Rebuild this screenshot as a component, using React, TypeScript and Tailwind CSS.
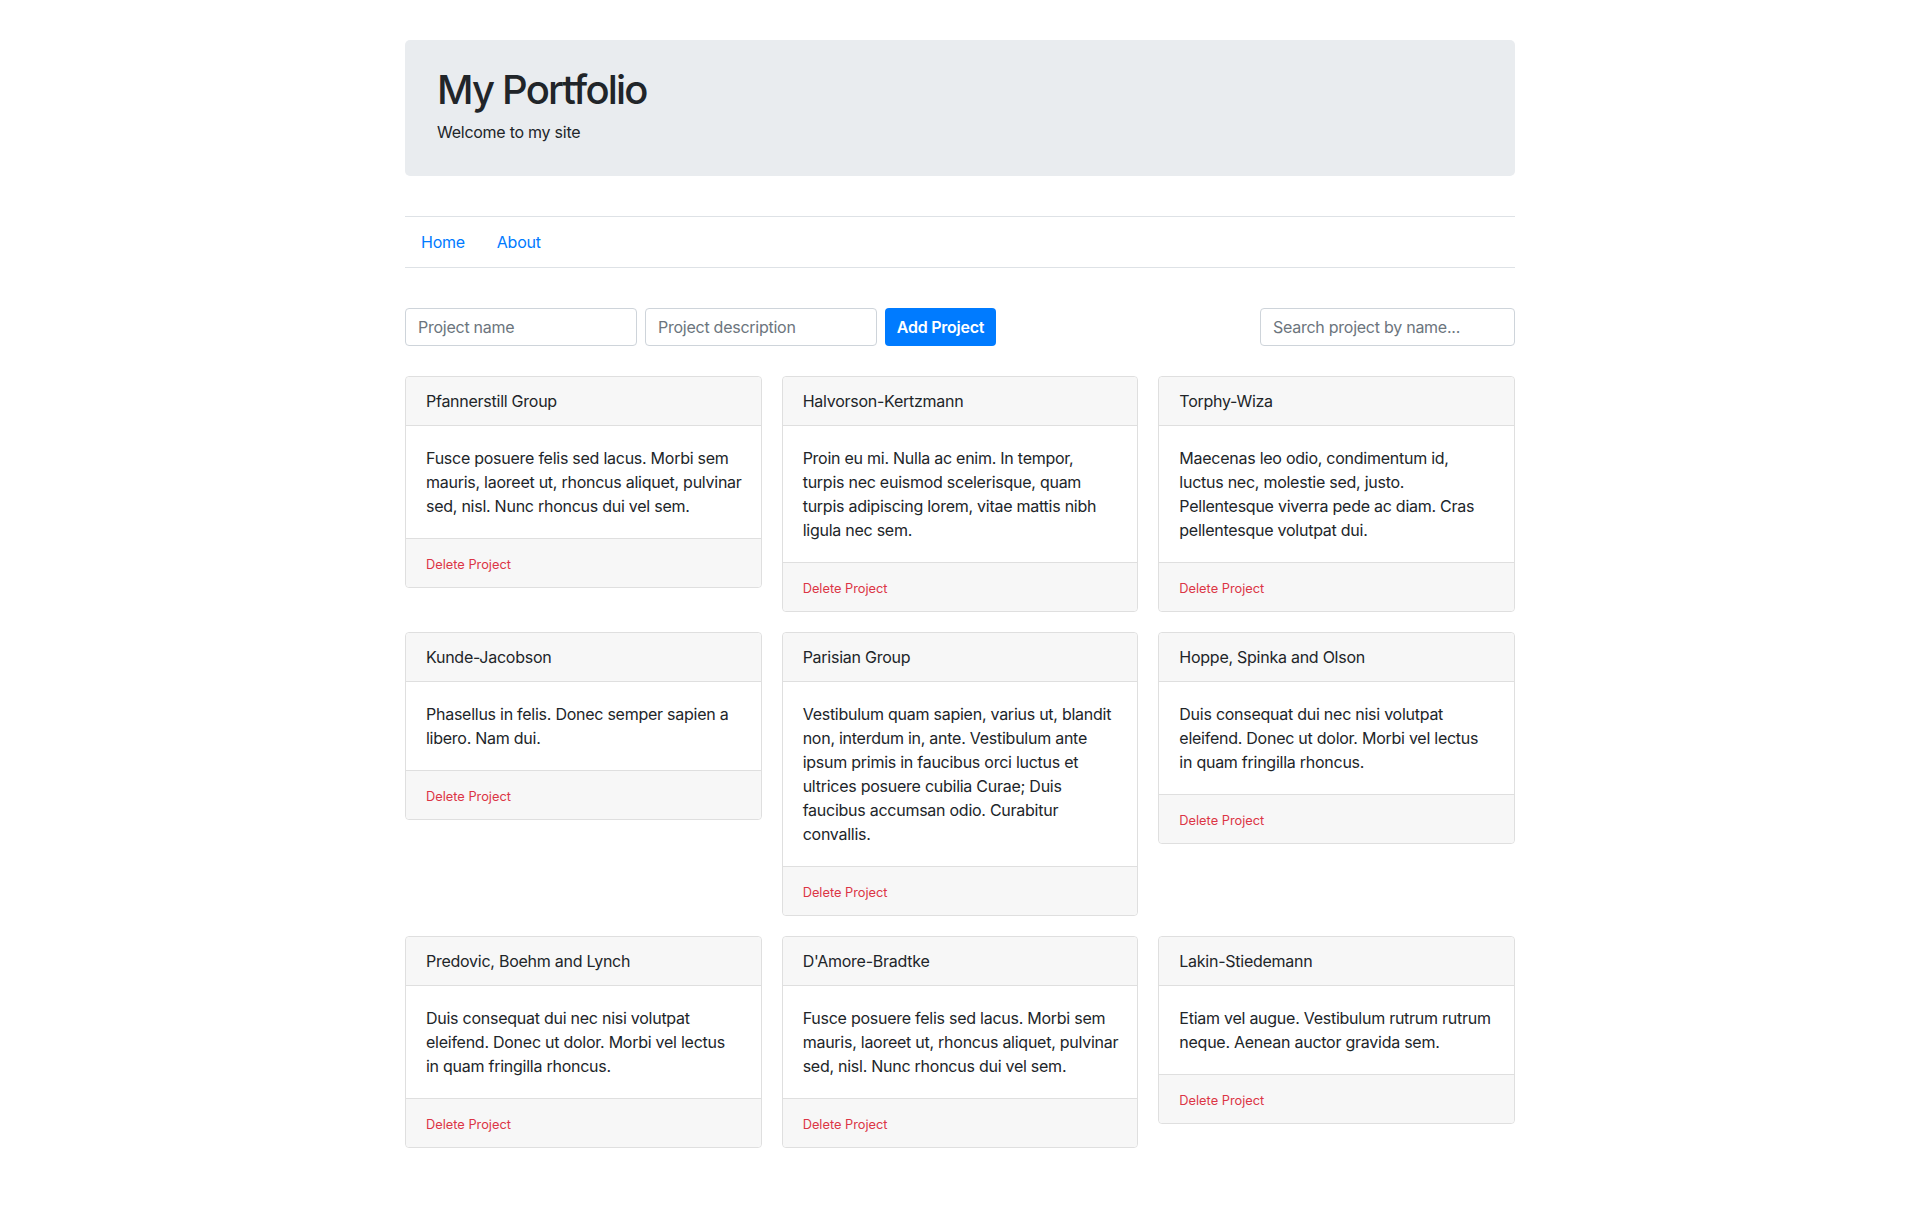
import React, { useState } from 'react';

type Project = {
  id: number;
  name: string;
  lines: string[];
};

const initialProjects: Project[] = [
  {
    id: 1,
    name: 'Pfannerstill Group',
    lines: ['Fusce posuere felis sed lacus. Morbi sem', 'mauris, laoreet ut, rhoncus aliquet, pulvinar', 'sed, nisl. Nunc rhoncus dui vel sem.'],
  },
  {
    id: 2,
    name: 'Halvorson-Kertzmann',
    lines: ['Proin eu mi. Nulla ac enim. In tempor,', 'turpis nec euismod scelerisque, quam', 'turpis adipiscing lorem, vitae mattis nibh', 'ligula nec sem.'],
  },
  {
    id: 3,
    name: 'Torphy-Wiza',
    lines: ['Maecenas leo odio, condimentum id,', 'luctus nec, molestie sed, justo.', 'Pellentesque viverra pede ac diam. Cras', 'pellentesque volutpat dui.'],
  },
  {
    id: 4,
    name: 'Kunde-Jacobson',
    lines: ['Phasellus in felis. Donec semper sapien a', 'libero. Nam dui.'],
  },
  {
    id: 5,
    name: 'Parisian Group',
    lines: [
      'Vestibulum quam sapien, varius ut, blandit',
      'non, interdum in, ante. Vestibulum ante',
      'ipsum primis in faucibus orci luctus et',
      'ultrices posuere cubilia Curae; Duis',
      'faucibus accumsan odio. Curabitur',
      'convallis.',
    ],
  },
  {
    id: 6,
    name: 'Hoppe, Spinka and Olson',
    lines: ['Duis consequat dui nec nisi volutpat', 'eleifend. Donec ut dolor. Morbi vel lectus', 'in quam fringilla rhoncus.'],
  },
  {
    id: 7,
    name: 'Predovic, Boehm and Lynch',
    lines: ['Duis consequat dui nec nisi volutpat', 'eleifend. Donec ut dolor. Morbi vel lectus', 'in quam fringilla rhoncus.'],
  },
  {
    id: 8,
    name: "D'Amore-Bradtke",
    lines: ['Fusce posuere felis sed lacus. Morbi sem', 'mauris, laoreet ut, rhoncus aliquet, pulvinar', 'sed, nisl. Nunc rhoncus dui vel sem.'],
  },
  {
    id: 9,
    name: 'Lakin-Stiedemann',
    lines: ['Etiam vel augue. Vestibulum rutrum rutrum', 'neque. Aenean auctor gravida sem.'],
  },
];

const ProjectCard: React.FC<{ project: Project; onDelete: (id: number) => void }> = ({ project, onDelete }) => (
  <div className="flex flex-col rounded border border-[#dfdfdf] bg-white">
    <div className="rounded-t bg-[#f7f7f7] border-b border-[#dfdfdf] px-5 py-3 leading-6">{project.name}</div>
    <div className="px-5 py-5 leading-6 whitespace-nowrap">
      {project.lines.map((line, i) => (
        <React.Fragment key={i}>
          {line}
          {i < project.lines.length - 1 && <br />}
        </React.Fragment>
      ))}
    </div>
    <div className="flex h-[49px] items-center rounded-b bg-[#f7f7f7] border-t border-[#dfdfdf] px-5 pt-1">
      <button onClick={() => onDelete(project.id)} className="block text-[12.8px] leading-6 tracking-normal text-[#dc3545] cursor-pointer">
        Delete Project
      </button>
    </div>
  </div>
);

export default function App() {
  const [projects, setProjects] = useState<Project[]>(initialProjects);
  const [name, setName] = useState('');
  const [description, setDescription] = useState('');
  const [search, setSearch] = useState('');

  const addProject = () => {
    if (!name.trim()) return;
    setProjects([...projects, { id: Date.now(), name, lines: [description] }]);
    setName('');
    setDescription('');
  };

  const visible = projects.filter(p => p.name.toLowerCase().includes(search.toLowerCase()));

  return (
    <div className="min-h-screen bg-white text-[#212529] text-base tracking-[-0.016em] font-['Inter','Liberation_Sans',sans-serif]">
      <div className="mx-auto w-[1110px] pt-10 pb-16">
        {/* Jumbotron */}
        <div className="rounded-[5px] bg-[#e9ecef] px-8 pt-[26px] pb-8">
          <h1 className="text-[40px] leading-[48px] font-medium tracking-[-0.045em] mb-[6px]">My Portfolio</h1>
          <p className="leading-6">Welcome to my site</p>
        </div>

        {/* Nav */}
        <nav className="mt-10 flex border-y border-[#dee2e6]">
          <a href="#" className="px-4 py-[13px] leading-6 text-[#007bff]">Home</a>
          <a href="#" className="px-4 py-[13px] leading-6 text-[#007bff]">About</a>
        </nav>

        {/* Form + search */}
        <div className="mt-10 flex items-center">
          <input
            value={name}
            onChange={e => setName(e.target.value)}
            placeholder="Project name"
            className="h-[38px] w-[232px] rounded border border-[#ced4da] px-3 placeholder:text-[#6c757d] outline-none"
          />
          <input
            value={description}
            onChange={e => setDescription(e.target.value)}
            placeholder="Project description"
            className="ml-2 h-[38px] w-[232px] rounded border border-[#ced4da] px-3 placeholder:text-[#6c757d] outline-none"
          />
          <button
            onClick={addProject}
            className="ml-2 h-[38px] w-[111px] rounded bg-[#007bff] font-semibold text-white"
          >
            Add Project
          </button>
          <input
            value={search}
            onChange={e => setSearch(e.target.value)}
            placeholder="Search project by name..."
            className="ml-auto h-[38px] w-[255px] rounded border border-[#ced4da] px-3 placeholder:text-[#6c757d] outline-none"
          />
        </div>

        {/* Cards */}
        <div className="mt-[30px] grid grid-cols-3 items-start gap-5">
          {visible.map(p => (
            <ProjectCard key={p.id} project={p} onDelete={id => setProjects(projects.filter(x => x.id !== id))} />
          ))}
        </div>
      </div>
    </div>
  );
}
